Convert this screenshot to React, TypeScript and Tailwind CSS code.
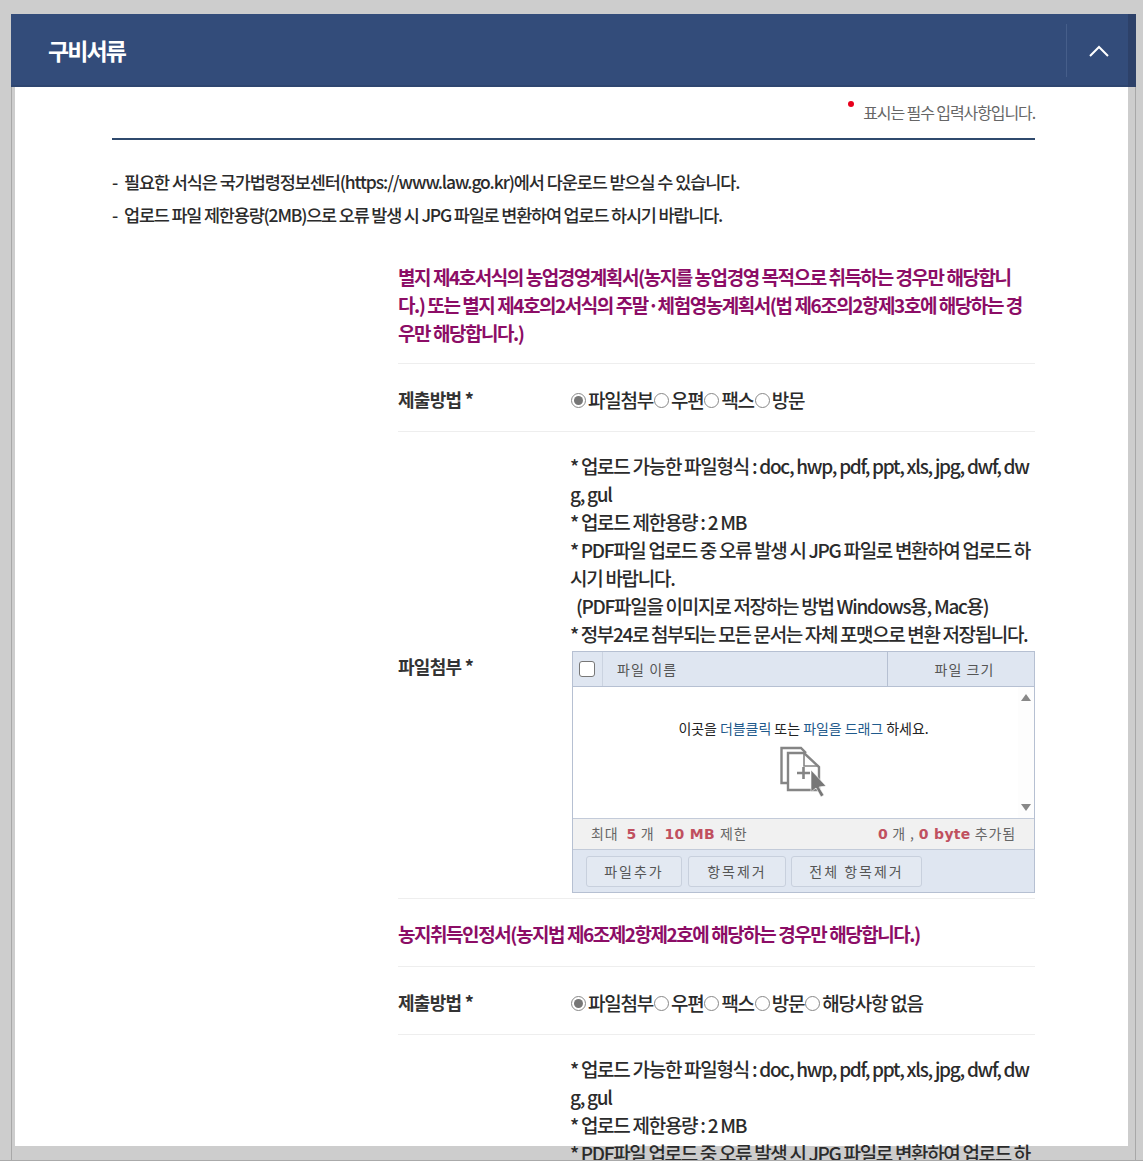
const font = "font-['Noto_Sans_CJK_KR','Noto_Sans',sans-serif]";
const numFont = "font-['DejaVu_Sans',sans-serif] font-bold text-[14px] tracking-[0.3px] text-[#c0505f]";

function Radio({ label, checked }: { label: string; checked?: boolean }) {
  return (
    <span className="flex items-center">
      <span className="ml-[1px] mr-[2px] flex h-[15px] w-[15px] items-center justify-center rounded-full border border-[#888] bg-white">
        {checked && <span className="h-[9px] w-[9px] rounded-full bg-[#777]" />}
      </span>
      <span>{label}</span>
    </span>
  );
}

function Guide() {
  return (
    <div className="-ml-[2px] w-[470px] pb-[3px] text-[19px] font-medium leading-[28px] tracking-[-1.28px] text-[#2b2b2b]">
      <p>* 업로드 가능한 파일형식 : doc, hwp, pdf, ppt, xls, jpg, dwf, dw</p>
      <p>g, gul</p>
      <p>* 업로드 제한용량 : 2 MB</p>
      <p className="tracking-[-1.33px]">* PDF파일 업로드 중 오류 발생 시 JPG 파일로 변환하여 업로드 하</p>
      <p>시기 바랍니다.</p>
      <p className="pl-[6px]">(PDF파일을 이미지로 저장하는 방법 Windows용, Mac용)</p>
      <p className="tracking-[-1.36px]">* 정부24로 첨부되는 모든 문서는 자체 포맷으로 변환 저장됩니다.</p>
    </div>
  );
}

function UploadIcon() {
  return (
    <svg width="48" height="52" viewBox="0 0 48 52" fill="none" stroke="#858585" strokeWidth="2.4">
      <path d="M8 37H1.5V2H21l5 5" />
      <path d="M8 7h16l15 14v23H8z" fill="#fff" />
      <path d="M24 7v13h15" strokeWidth="1.6" />
      <path d="M17 27h13M23.500 21v12" strokeWidth="2.6" />
      <path d="M31 24v22l5-4 5 9 3-2-5-8 7-1z" fill="#777" stroke="#fff" strokeWidth="0.6" />
    </svg>
  );
}

function Uploader() {
  return (
    <div className="flex w-[463px] flex-col border border-[#b6c0d2] text-[14px] text-[#555]">
      <div className="flex h-[35px] items-center border-b border-[#b6c0d2] bg-[#dfe6f1] tracking-[1.1px]">
        <div className="flex h-full w-[30px] items-center justify-center border-r border-[#cbd3e0]">
          <span className="-ml-[2px] h-[16px] w-[16px] rounded-[3px] border border-[#777] bg-white" />
        </div>
        <div className="flex-1 pl-[14px]">파일 이름</div>
        <div className="flex h-full w-[147px] items-center justify-center border-l border-[#b6c0d2] pl-[7px]">파일 크기</div>
      </div>
      <div className="relative flex h-[131px] flex-col items-center bg-white pt-[31px]">
        <p className="text-[14px] leading-[20px] tracking-[-0.05px] text-[#222]">
          이곳을 <span className="text-[#1f5a8c]">더블클릭</span> 또는 <span className="text-[#1f5a8c]">파일을 드래그</span> 하세요.
        </p>
        <div className="mt-[8px]">
          <UploadIcon />
        </div>
        <div className="absolute right-0 top-0 flex h-full w-[16px] flex-col items-center justify-between bg-[#fdfdfd] py-[7px]">
          <span className="h-0 w-0 border-x-[5px] border-b-[7px] border-x-transparent border-b-[#888]" />
          <span className="h-0 w-0 border-x-[5px] border-t-[7px] border-x-transparent border-t-[#888]" />
        </div>
      </div>
      <div className="flex h-[32px] items-center justify-between border-y border-[#c3cbd9] bg-[#f1f1f1] px-[18px] text-[14px] tracking-[0.9px] text-[#666]">
        <span>
          최대 <b className={`${numFont} ml-[4px]`}>5</b> 개{" "}
          <b className={`${numFont} ml-[6px]`}>10 MB</b> <span className="ml-[1px]">제한</span>
        </span>
        <span>
          <b className={numFont}>0</b> 개 , <b className={numFont}>0 byte</b> 추가됨
        </span>
      </div>
      <div className="flex h-[42px] items-center bg-[#dfe6f1] pl-[13px] tracking-[2px]">
        <button className="h-[31px] w-[96px] rounded-[3px] border border-[#c8d0dd] bg-[#e3e9f2]">파일추가</button>
        <button className="ml-[6px] h-[31px] w-[98px] rounded-[3px] border border-[#c8d0dd] bg-[#e3e9f2]">항목제거</button>
        <button className="ml-[5px] h-[31px] w-[131px] rounded-[3px] border border-[#c8d0dd] bg-[#e3e9f2]">전체 항목제거</button>
      </div>
    </div>
  );
}

function MethodRow({ extra }: { extra?: boolean }) {
  return (
    <div className="flex h-[68px] items-center border-b border-[#eee]">
      <div className="w-[172px] shrink-0 pt-[3px] text-[18px] font-bold tracking-[-0.7px] text-[#333]">제출방법 *</div>
      <div className="flex pt-[6px] text-[19px] font-medium tracking-[-1.25px] text-[#2b2b2b]">
        <Radio label="파일첨부" checked />
        <Radio label="우편" />
        <Radio label="팩스" />
        <Radio label="방문" />
        {extra && <Radio label="해당사항 없음" />}
      </div>
    </div>
  );
}

export default function App() {
  return (
    <div className={`${font} h-[1161px] w-[1143px] overflow-hidden border-b border-[#aaa] bg-[#cdcdcd] pl-[11px] pt-[14px]`}>
      <div className="h-full w-[1125px] border-x border-[#a8a8a8]">
        <header className="-mx-[1px] flex h-[73px] items-stretch justify-between bg-[#334c7a] pl-[37px] shadow-[inset_0_-2px_0_#2f4670]">
          <h2 className="self-center text-[23px] leading-[74px] -translate-y-[1px] font-bold tracking-[-1.9px] text-white">구비서류</h2>
          <div className="flex">
            <div className="my-[10px] flex w-[62px] items-center justify-center border-l border-[#465e8a] pl-[3px]">
              <svg width="20" height="12" viewBox="0 0 20 12" fill="none" stroke="#fff" strokeWidth="2">
                <path d="M1 11l9-9 9 9" />
              </svg>
            </div>
            <div className="w-[8px] bg-[#2d4169]" />
          </div>
        </header>
        <div className="ml-[3px] h-[1059px] w-[1113px] bg-white pl-[97px]">
          <div className="w-[923px]">
            <div className="relative h-[53px] border-b-2 border-[#2f4a6d] pt-[14px] text-right text-[16px] leading-[22px] tracking-[-1.1px] text-[#666]">
              <span className="absolute right-[181px] top-[14px] h-[6px] w-[6px] rounded-full bg-[#e8001c]" />
              표시는 필수 입력사항입니다.
            </div>
            <div className="pt-[25px] text-[17.500px] font-medium leading-[33px] text-[#2b2b2b]">
              <p className="flex tracking-[-1.1px]">
                <span className="w-[12px]">-</span>
                <span>필요한 서식은 국가법령정보센터(https://www.law.go.kr)에서 다운로드 받으실 수 있습니다.</span>
              </p>
              <p className="flex tracking-[-1.2px]">
                <span className="w-[12px]">-</span>
                <span>업로드 파일 제한용량(2MB)으로 오류 발생 시 JPG 파일로 변환하여 업로드 하시기 바랍니다.</span>
              </p>
            </div>
            <section className="ml-[286px] mt-[32px] w-[637px]">
              <h3 className="border-b border-[#eee] pb-[16px] text-[19px] font-bold leading-[28px] tracking-[-1.45px] text-[#8c0d66]">
                별지 제4호서식의 농업경영계획서(농지를 농업경영 목적으로 취득하는 경우만 해당합니<br />
                다.) 또는 별지 제4호의2서식의 주말·체험영농계획서(법 제6조의2항제3호에 해당하는 경<br />
                우만 해당합니다.)
              </h3>
              <MethodRow />
              <div className="flex items-center border-b border-[#eee] pb-[5px] pt-[20px]">
                <div className="mb-[12px] w-[174px] shrink-0 text-[18px] font-bold tracking-[-0.7px] text-[#333]">파일첨부 *</div>
                <div className="w-[463px]">
                  <Guide />
                  <Uploader />
                </div>
              </div>
              <h3 className="flex h-[68px] items-center border-b border-[#eee] pt-[4px] text-[19px] font-bold tracking-[-1.45px] text-[#8c0d66]">
                농지취득인정서(농지법 제6조제2항제2호에 해당하는 경우만 해당합니다.)
              </h3>
              <MethodRow extra />
              <div className="ml-[174px] pt-[20px]">
                <Guide />
              </div>
            </section>
          </div>
        </div>
      </div>
    </div>
  );
}
